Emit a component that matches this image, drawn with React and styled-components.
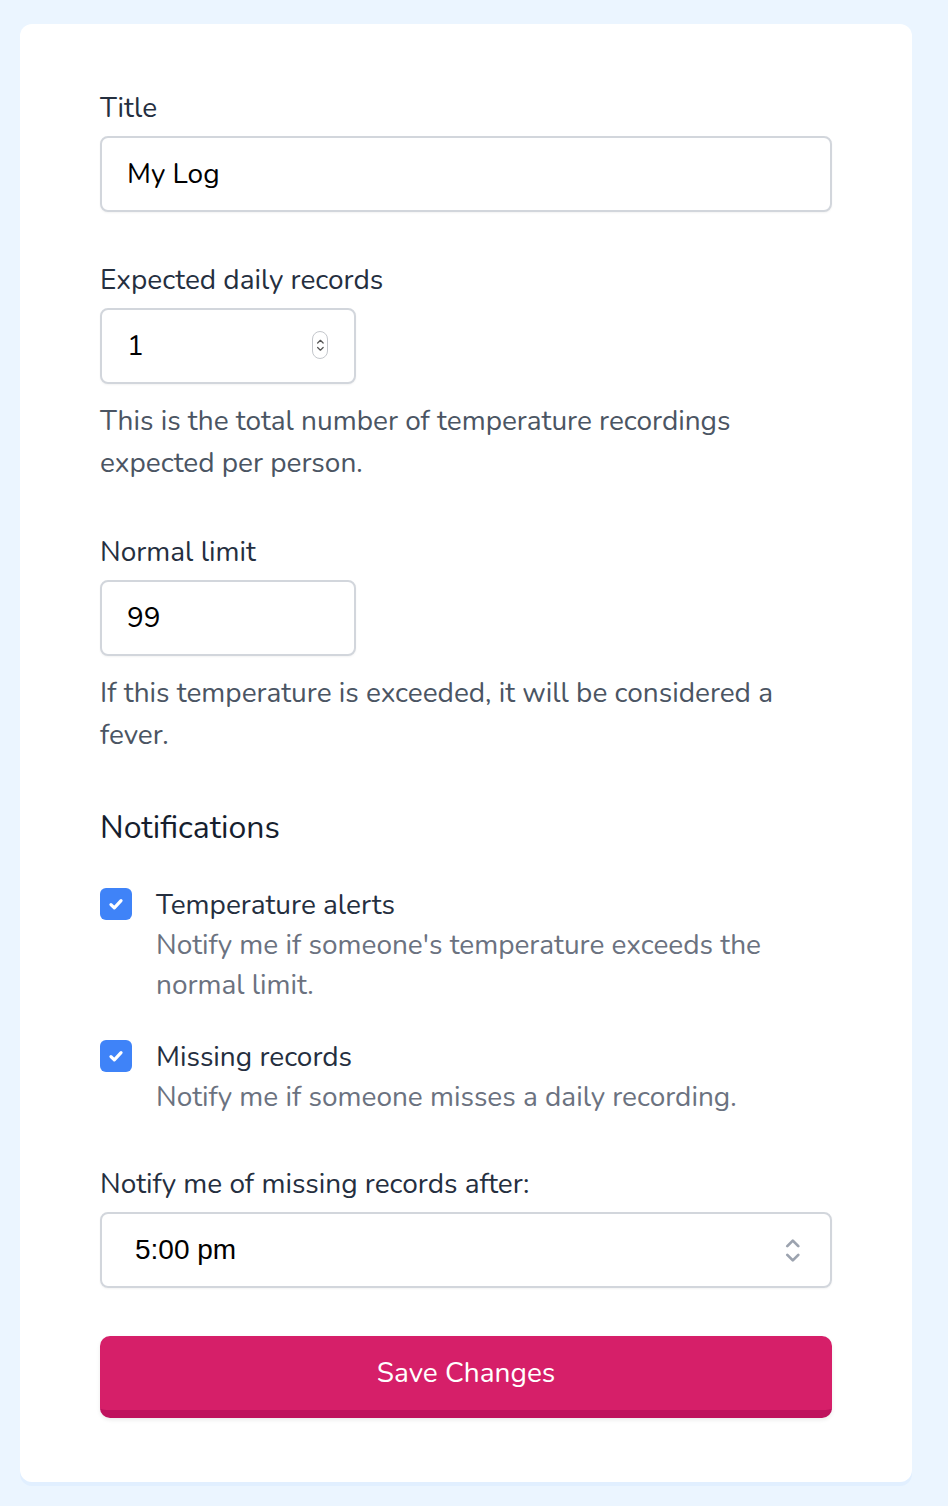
import React from "react";
import styled, { createGlobalStyle } from "styled-components";

const GlobalStyle = createGlobalStyle`
  html, body {
    margin: 0;
    padding: 0;
    background: #ebf5ff;
    font-family: "Nunito", "Open Sans", sans-serif;
  }
`;

const Page = styled.div`
  padding: 24px 36px 24px 20px;
  min-height: 1506px;
  box-sizing: border-box;
`;

const Card = styled.form`
  background: #fff;
  border-radius: 12px;
  box-shadow: 0 4px 0 #e1efff;
  padding: 66px 80px 64px;
  display: flex;
  flex-direction: column;
`;

const Field = styled.div`
  display: flex;
  flex-direction: column;
  margin-bottom: ${({ $gap }) => $gap || 0}px;
`;

const Label = styled.label`
  font-size: 28px;
  line-height: 36px;
  color: #252f3f;
  margin-bottom: 10px;
`;

const Input = styled.input`
  box-sizing: border-box;
  width: ${({ $w }) => ($w ? `${$w}px` : "100%")};
  height: 76px;
  border: 2px solid #d2d6dc;
  border-radius: 8px;
  padding: 0 16px 0 25px;
  font-family: inherit;
  font-size: 28px;
  color: #000;
  background: #fff;
  box-shadow: 0 1px 2px rgba(0, 0, 0, 0.05);
  outline: none;
`;

const NumberWrap = styled.div`
  position: relative;
  width: 256px;
`;

const Spinner = styled.span`
  position: absolute;
  right: 28px;
  top: 23px;
  width: 16px;
  height: 28px;
  border: 1px solid #c4c7cc;
  border-radius: 8px;
  box-sizing: border-box;
  display: flex;
  align-items: center;
  justify-content: center;
`;

const Help = styled.p`
  margin: 16px 0 0;
  font-size: 28px;
  line-height: 42px;
  color: #4b5563;
`;

const Heading = styled.h3`
  margin: 0 0 37px;
  font-size: 32px;
  font-weight: 400;
  line-height: 40px;
  color: #161e2e;
`;

const CheckRow = styled.div`
  display: flex;
  gap: 24px;
  margin-bottom: ${({ $gap }) => $gap || 0}px;
`;

const Box = styled.span`
  flex: none;
  width: 32px;
  height: 32px;
  margin-top: 3px;
  border-radius: 6px;
  background: #3f83f8;
  display: flex;
  align-items: center;
  justify-content: center;
`;

const CheckText = styled.div`
  display: flex;
  flex-direction: column;
`;

const CheckTitle = styled.span`
  font-size: 28px;
  line-height: 40px;
  color: #252f3f;
`;

const CheckDesc = styled.span`
  font-size: 28px;
  line-height: 40px;
  color: #6b7280;
`;

const SelectBox = styled.div`
  box-sizing: border-box;
  height: 76px;
  border: 2px solid #d2d6dc;
  border-radius: 8px;
  padding: 0 28px 0 33px;
  display: flex;
  align-items: center;
  justify-content: space-between;
  font-family: "Liberation Sans", Arial, sans-serif;
  font-size: 28px;
  color: #000;
  box-shadow: 0 1px 2px rgba(0, 0, 0, 0.05);
`;

const SaveButton = styled.button`
  margin-top: 48px;
  height: 82px;
  border: none;
  border-bottom: 8px solid #bf125d;
  border-radius: 10px;
  background: #d61f69;
  color: #fff;
  font-family: inherit;
  font-size: 28px;
  box-shadow: 0 2px 4px rgba(0, 0, 0, 0.08);
  cursor: pointer;
`;

const Check = () => (
  <svg width="18" height="18" viewBox="0 0 16 16">
    <path d="M3.5 8.5l3 3 6-6.5" fill="none" stroke="#fff" strokeWidth="2.8" strokeLinecap="round" strokeLinejoin="round" />
  </svg>
);

const Chevrons = ({ size = 22, color = "#9ca3af", sw = 2.5 }) => (
  <svg width={size * 0.8} height={size * 1.5} viewBox="0 0 16 24">
    <path d="M3 8l5-5 5 5M3 16l5 5 5-5" fill="none" stroke={color} strokeWidth={sw} strokeLinecap="round" strokeLinejoin="round" />
  </svg>
);

const App = () => (
  <Page>
    <GlobalStyle />
    <Card>
      <Field $gap={50}>
        <Label>Title</Label>
        <Input defaultValue="My Log" />
      </Field>

      <Field $gap={50}>
        <Label>Expected daily records</Label>
        <NumberWrap>
          <Input $w={256} defaultValue="1" />
          <Spinner>
            <Chevrons size={11} color="#555" sw={2.2} />
          </Spinner>
        </NumberWrap>
        <Help>
          This is the total number of temperature recordings
          <br />
          expected per person.
        </Help>
      </Field>

      <Field $gap={52}>
        <Label>Normal limit</Label>
        <Input $w={256} defaultValue="99" />
        <Help>
          If this temperature is exceeded, it will be considered a
          <br />
          fever.
        </Help>
      </Field>

      <Heading>Notifications</Heading>

      <CheckRow $gap={32}>
        <Box>
          <Check />
        </Box>
        <CheckText>
          <CheckTitle>Temperature alerts</CheckTitle>
          <CheckDesc>
            Notify me if someone's temperature exceeds the
            <br />
            normal limit.
          </CheckDesc>
        </CheckText>
      </CheckRow>

      <CheckRow $gap={49}>
        <Box>
          <Check />
        </Box>
        <CheckText>
          <CheckTitle>Missing records</CheckTitle>
          <CheckDesc>Notify me if someone misses a daily recording.</CheckDesc>
        </CheckText>
      </CheckRow>

      <Field>
        <Label>Notify me of missing records after:</Label>
        <SelectBox>
          <span>5:00 pm</span>
          <Chevrons size={22} />
        </SelectBox>
      </Field>

      <SaveButton type="button">Save Changes</SaveButton>
    </Card>
  </Page>
);

export default App;
